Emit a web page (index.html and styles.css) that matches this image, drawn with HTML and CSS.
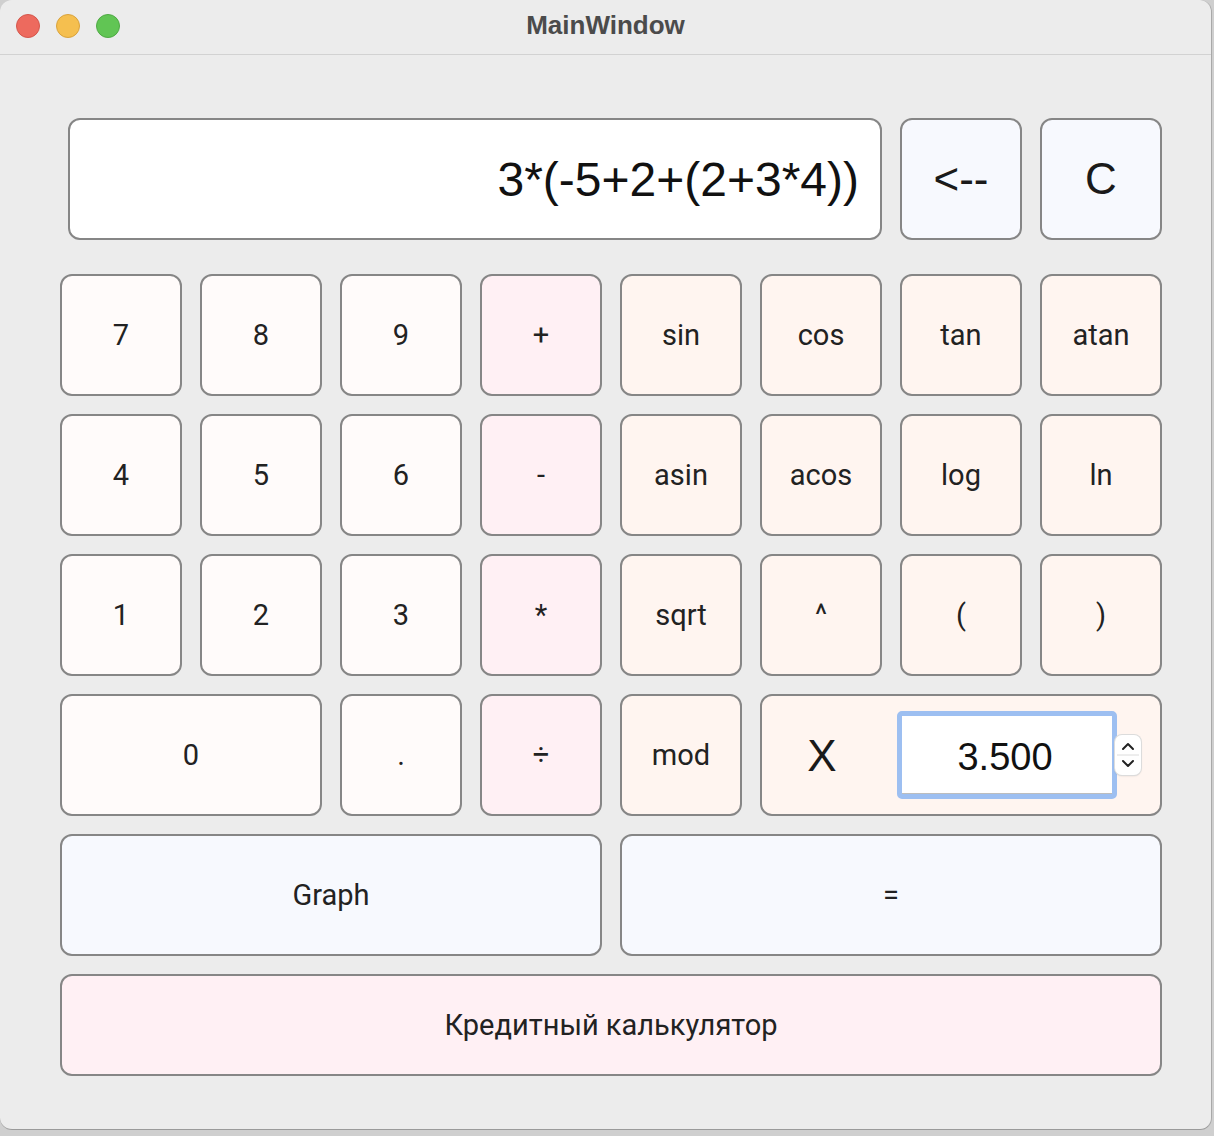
FILE: index.html
```html
<!DOCTYPE html>
<html>
<head>
<meta charset="utf-8">
<title>MainWindow</title>
<link rel="stylesheet" href="styles.css">
</head>
<body>
<div class="window">
  <div class="titlebar">
    <div class="lights">
      <span class="light red"></span>
      <span class="light yellow"></span>
      <span class="light green"></span>
    </div>
    <div class="title">MainWindow</div>
  </div>
  <div class="content">
    <div class="toprow">
      <div class="display">3*(-5+2+(2+3*4))</div>
      <button class="btn blue big">&lt;--</button>
      <button class="btn blue big">C</button>
    </div>
    <div class="grid">
      <button class="btn num">7</button>
      <button class="btn num">8</button>
      <button class="btn num">9</button>
      <button class="btn op">+</button>
      <button class="btn fn">sin</button>
      <button class="btn fn">cos</button>
      <button class="btn fn">tan</button>
      <button class="btn fn">atan</button>

      <button class="btn num">4</button>
      <button class="btn num">5</button>
      <button class="btn num">6</button>
      <button class="btn op">-</button>
      <button class="btn fn">asin</button>
      <button class="btn fn">acos</button>
      <button class="btn fn">log</button>
      <button class="btn fn">ln</button>

      <button class="btn num">1</button>
      <button class="btn num">2</button>
      <button class="btn num">3</button>
      <button class="btn op">*</button>
      <button class="btn fn">sqrt</button>
      <button class="btn fn">^</button>
      <button class="btn fn">(</button>
      <button class="btn fn">)</button>

      <button class="btn num span2">0</button>
      <button class="btn num">.</button>
      <button class="btn op">÷</button>
      <button class="btn fn">mod</button>
      <div class="xbox">
        <span class="xlabel">X</span>
        <div class="spin">
          <div class="spinfield">3.500</div>
        </div>
        <div class="arrows">
          <svg width="26" height="40" viewBox="0 0 26 40">
            <path d="M8 14 L13 9 L18 14" fill="none" stroke="#222" stroke-width="2" stroke-linecap="round" stroke-linejoin="round"/>
            <line x1="2" y1="20" x2="24" y2="20" stroke="#dcdcdc" stroke-width="1"/>
            <path d="M8 26 L13 31 L18 26" fill="none" stroke="#222" stroke-width="2" stroke-linecap="round" stroke-linejoin="round"/>
          </svg>
        </div>
      </div>

      <button class="btn blue span4">Graph</button>
      <button class="btn blue span4">=</button>

      <button class="btn op span8">Кредитный калькулятор</button>
    </div>
  </div>
</div>
</body>
</html>
```
FILE: styles.css
```css
html, body {
  margin: 0;
  padding: 0;
}
body {
  width: 1214px;
  height: 1136px;
  background: #cfcfcf;
  overflow: hidden;
}
.window {
  width: 1211px;
  height: 1129px;
  background: #ececec;
  border-radius: 12px;
  border-right: 1px solid #a9a9a9;
  border-bottom: 1px solid #9a9a9a;
  overflow: hidden;
}
.titlebar {
  height: 54px;
  border-bottom: 1px solid #d2d2d2;
  position: relative;
  display: flex;
  align-items: center;
  justify-content: center;
}
.lights {
  position: absolute;
  left: 16px;
  top: 14px;
  display: flex;
  gap: 16px;
}
.light {
  width: 24px;
  height: 24px;
  border-radius: 50%;
  box-sizing: border-box;
}
.red { background: #ed6a5e; border: 1px solid #d4574c; }
.yellow { background: #f5bf4f; border: 1px solid #d9a33d; }
.green { background: #61c554; border: 1px solid #4fa944; }
.title {
  font-family: "Liberation Sans", Arial, sans-serif;
  font-weight: bold;
  font-size: 26px;
  color: #4b4b4b;
  margin-top: -4px;
}
.content {
  padding: 63px 0 0 60px;
}
.toprow {
  display: flex;
  gap: 18px;
  padding-left: 8px;
  height: 122px;
}
.display {
  width: 814px;
  height: 122px;
  box-sizing: border-box;
  background: #ffffff;
  border: 2px solid #868686;
  border-radius: 12px;
  font-family: "Liberation Sans", Arial, sans-serif;
  font-size: 48px;
  color: #111;
  display: flex;
  align-items: center;
  justify-content: flex-end;
  padding-right: 21px;
}
.btn {
  box-sizing: border-box;
  width: 122px;
  height: 122px;
  border: 2px solid #868686;
  border-radius: 12px;
  font-family: Roboto, "Liberation Sans", sans-serif;
  font-size: 29px;
  color: #222;
  padding: 0;
  margin: 0;
  display: flex;
  align-items: center;
  justify-content: center;
}
.big {
  font-family: "Liberation Sans", Arial, sans-serif;
  font-size: 44px;
  color: #1a1a1a;
}
.num { background: #fffbfa; }
.op { background: #fff0f4; }
.fn { background: #fff5f0; }
.blue { background: #f7f9fe; }
.grid {
  margin-top: 34px;
  display: grid;
  grid-template-columns: repeat(8, 122px);
  grid-template-rows: repeat(5, 122px) 102px;
  gap: 18px;
}
.grid .btn {
  width: auto;
  height: auto;
}
.span2 { grid-column: span 2; }
.span4 { grid-column: span 4; }
.span8 { grid-column: span 8; }
.xbox {
  grid-column: span 3;
  box-sizing: border-box;
  background: #fff5f0;
  border: 2px solid #868686;
  border-radius: 12px;
  display: flex;
  align-items: center;
}
.xlabel {
  width: 120px;
  text-align: center;
  font-family: "Liberation Sans", Arial, sans-serif;
  font-size: 44px;
  color: #1a1a1a;
  margin-right: 15px;
  margin-top: 2px;
}
.spin {
  width: 220px;
  height: 88px;
  box-sizing: border-box;
  border: 5px solid #9dbff1;
  border-radius: 5px;
  background: #ffffff;
  display: flex;
}
.spinfield {
  flex: 1;
  border-bottom: 1px solid #bdbdbd;
  display: flex;
  align-items: center;
  justify-content: center;
  font-family: "Liberation Sans", Arial, sans-serif;
  font-size: 38px;
  color: #111;
  padding-top: 5px;
  padding-right: 4px;
}
.arrows {
  width: 26px;
  height: 40px;
  margin-left: -2px;
  background: #ffffff;
  border-radius: 7px;
  box-shadow: 0 0 0 1px #dcdcdc, 0 1px 2px rgba(0,0,0,0.15);
}
.arrows svg {
  display: block;
}
```
